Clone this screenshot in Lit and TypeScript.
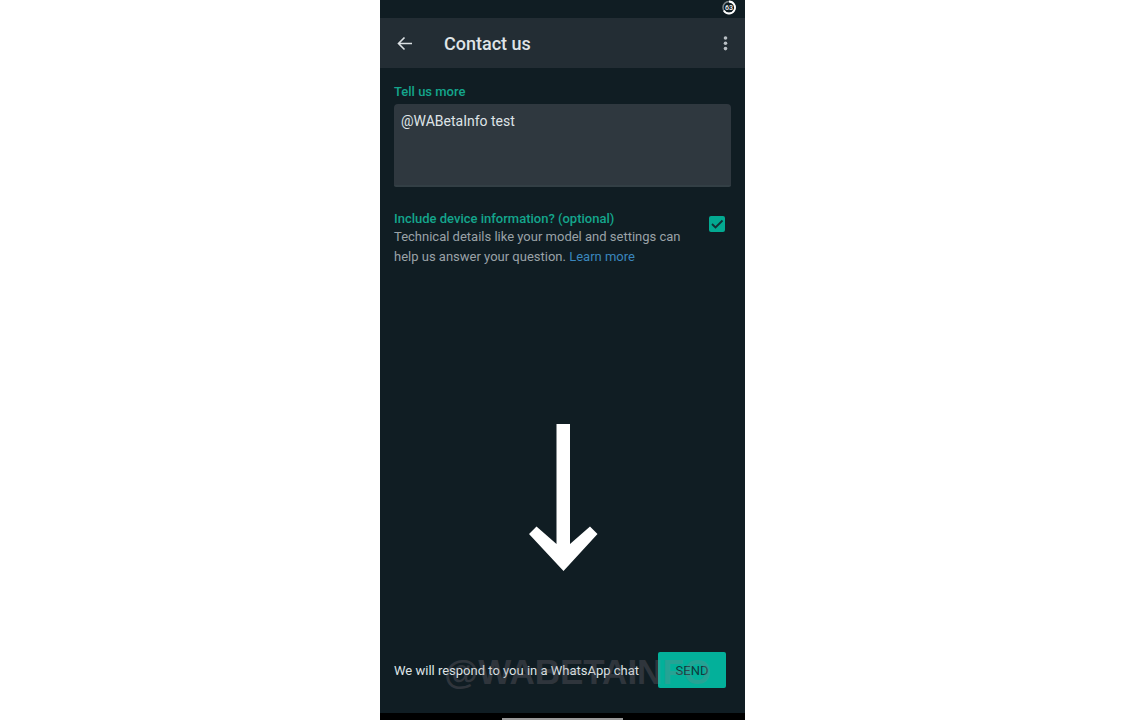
import { LitElement, html, css } from "lit";
import { customElement, state } from "lit/decorators.js";

@customElement("app-root")
class AppRoot extends LitElement {
  @state() private message = "@WABetaInfo test";
  @state() private includeDevice = true;

  static styles = css`
    :host {
      display: flex;
      justify-content: center;
      min-height: 100vh;
      padding-right: 6px;
      box-sizing: border-box;
      background: #fff;
      font-family: Roboto, "Liberation Sans", sans-serif;
      color: #dfe4e7;
    }
    * { box-sizing: border-box; }
    .phone {
      display: flex;
      flex-direction: column;
      width: 100%;
      max-width: 365px;
      background: #101d23;
    }
    .status {
      display: flex;
      justify-content: flex-end;
      height: 18px;
      padding-right: 8px;
    }
    .bar {
      display: flex;
      align-items: center;
      height: 50px;
      padding: 0 10px 0 12px;
      background: #232d34;
    }
    .icon {
      display: flex;
      padding: 0;
      border: 0;
      background: none;
      cursor: pointer;
    }
    h1 {
      flex: 1;
      margin: 0 0 0 27px;
      padding-top: 2px;
      font-size: 18px;
      line-height: 24px;
      font-weight: 500;
    }
    main {
      display: flex;
      flex-direction: column;
      flex: 1;
      padding: 16px 14px 0;
    }
    .title {
      display: block;
      font-size: 13px;
      line-height: 16px;
      font-weight: 500;
      color: #14a58c;
    }
    textarea {
      display: block;
      width: 100%;
      height: 83px;
      margin-top: 4px;
      padding: 7px;
      border: 0;
      border-bottom: 2px solid #333f45;
      border-radius: 4px 4px 2px 2px;
      outline: 0;
      resize: none;
      background: #2f383f;
      color: #dfe4e7;
      font-family: inherit;
      font-size: 14px;
      line-height: 20px;
    }
    .device {
      display: flex;
      justify-content: space-between;
      align-items: flex-start;
      margin-top: 24px;
      padding-right: 6px;
    }
    .device p {
      margin: 0;
      font-size: 13px;
      line-height: 20px;
      color: #9aa2a7;
    }
    a { color: #3a86bd; text-decoration: none; }
    .check {
      display: grid;
      margin-top: 5px;
    }
    .check > * { grid-area: 1 / 1; }
    .check input {
      appearance: none;
      width: 16px;
      height: 16px;
      margin: 0;
      border: 2px solid #03a991;
      border-radius: 2px;
    }
    .check input:checked { background: #03a991; }
    .check input:not(:checked) + svg { visibility: hidden; }
    .check svg { pointer-events: none; }
    .pointer {
      display: flex;
      flex: 1;
      justify-content: center;
      align-items: flex-end;
      padding: 0 0 81px 1px;
    }
    footer {
      position: relative;
      display: flex;
      align-items: center;
      justify-content: space-between;
      padding: 0 19px 25px 14px;
      font-size: 13px;
      line-height: 20px;
    }
    .note { padding-top: 2px; }
    .send {
      height: 36px;
      width: 68px;
      padding: 0;
      border: 0;
      border-radius: 2px;
      background: #03b09a;
      color: #0f3b3d;
      font-family: inherit;
      font-size: 13px;
    }
    .mark {
      position: absolute;
      top: 0;
      right: 34px;
      font-family: "Liberation Sans", sans-serif;
      font-size: 35px;
      line-height: 40px;
      font-weight: 700;
      color: #8b7d86;
      opacity: 0.25;
      pointer-events: none;
    }
    .nav {
      display: flex;
      justify-content: center;
      align-items: flex-end;
      height: 7px;
      background: #000;
    }
    .handle {
      width: 33%;
      height: 2px;
      background: #999;
    }
  `;

  render() {
    return html`
      <div class="phone">
        <div class="status">
          <svg width="16" height="16" viewBox="0 0 16 16" role="img" aria-label="Battery 63">
            <circle cx="8" cy="7.5" r="6" fill="none" stroke="#7b8488" stroke-width="1.5" />
            <path d="M8 1.5a6 6 0 1 1-5.2 9" fill="none" stroke="#fff" stroke-width="1.8" />
            <text x="8" y="10" text-anchor="middle" font-size="7" font-weight="500" fill="#fff">63</text>
          </svg>
        </div>
        <header class="bar">
          <button class="icon" aria-label="Back">
            <svg width="25" height="24" viewBox="0 0 25 24">
              <path d="M20 12.500H7M12.500 6.500l-6 6 6 6" fill="none" stroke="#dce1e4" stroke-width="1.600" />
            </svg>
          </button>
          <h1>Contact us</h1>
          <button class="icon" aria-label="More options">
            <svg width="20" height="24" viewBox="0 0 20 24" fill="#b9bfc4">
              <circle cx="10.5" cy="7" r="1.8" />
              <circle cx="10.5" cy="12.3" r="1.8" />
              <circle cx="10.5" cy="17.6" r="1.8" />
            </svg>
          </button>
        </header>
        <main>
          <label class="title" for="message">Tell us more</label>
          <textarea
            id="message"
            spellcheck="false"
            .value=${this.message}
            @input=${(e: Event) => (this.message = (e.target as HTMLTextAreaElement).value)}
          ></textarea>
          <section class="device">
            <div>
              <label class="title" for="device">Include device information? (optional)</label>
              <p>
                Technical details like your model and settings can<br />help us answer your question.
                <a href="#learn">Learn more</a>
              </p>
            </div>
            <span class="check">
              <input
                id="device"
                type="checkbox"
                .checked=${this.includeDevice}
                @change=${(e: Event) => (this.includeDevice = (e.target as HTMLInputElement).checked)}
              />
              <svg width="16" height="16" viewBox="0 0 16 16">
                <path d="M3 8l3.500 3.500L13.500 4.500" fill="none" stroke="#123034" stroke-width="1.800" />
              </svg>
            </span>
          </section>
          <div class="pointer">
            <svg width="70" height="148" viewBox="0 0 70 148" fill="#fff" aria-hidden="true">
              <path d="M28.500 1H42V121L62 103.500L69.500 111L35.500 148L1 111L8.500 103.500L28.500 121Z" />
            </svg>
          </div>
        </main>
        <footer>
          <span class="note">We will respond to you in a WhatsApp chat</span>
          <button class="send">SEND</button>
          <span class="mark" aria-hidden="true">@WABETAINFO</span>
        </footer>
        <div class="nav"><div class="handle"></div></div>
      </div>
    `;
  }
}
